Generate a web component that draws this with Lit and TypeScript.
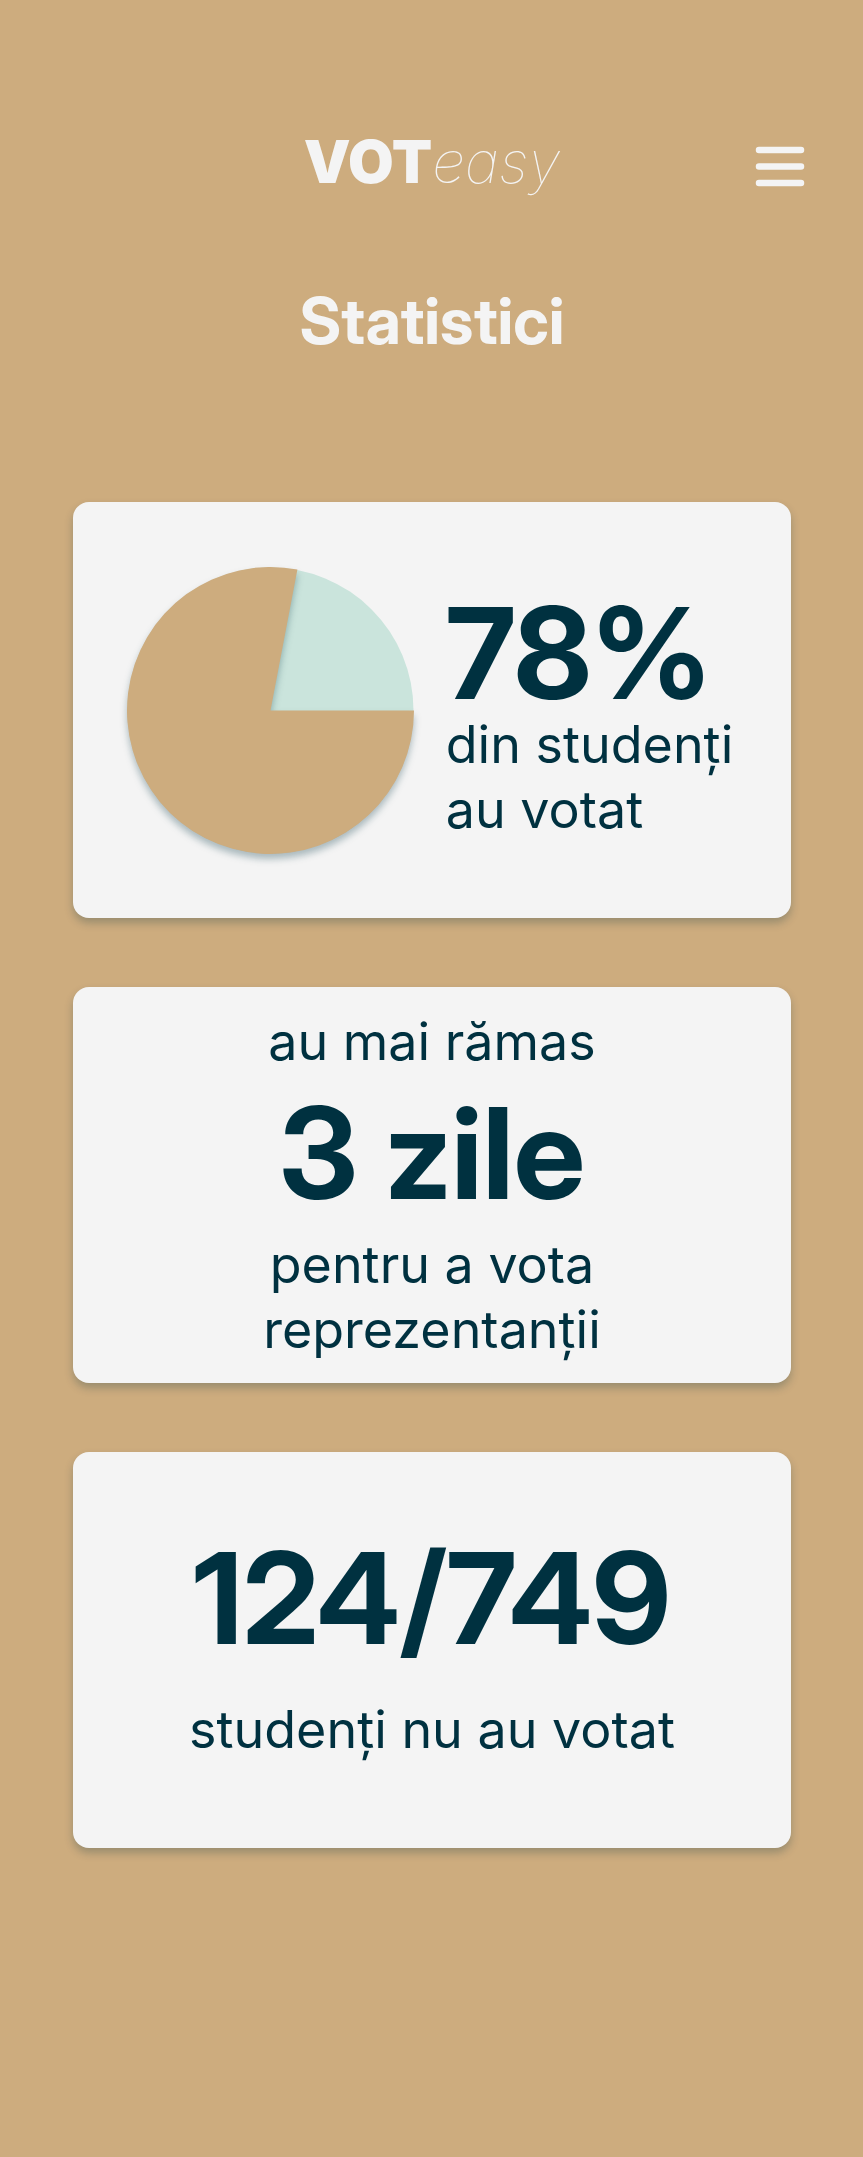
import { LitElement, html, css } from "lit";
import { customElement } from "lit/decorators.js";

@customElement("app-root")
class AppRoot extends LitElement {
  static styles = css`
    :host {
      display: block;
      box-sizing: border-box;
      min-height: 100vh;
      padding: 126px 72px 0 73px;
      background: #cdac7e;
      color: #003140;
      font-family: Inter, "Liberation Sans", sans-serif;
    }
    header {
      display: grid;
      grid-template-columns: 1fr auto 1fr;
      align-items: center;
      margin: 0 -14px;
      color: #f4f4f4;
    }
    .logo {
      grid-column: 2;
      font-size: 59px;
      line-height: 72px;
      color: inherit;
      text-decoration: none;
    }
    .logo b { font-weight: 900; }
    .logo i { font-weight: 100; }
    .menu {
      justify-self: end;
      display: block;
      padding: 8px 0 0;
      border: 0;
      background: none;
      color: inherit;
    }
    .menu svg { display: block; }
    h1 {
      margin: 85px 0 143px;
      color: #f4f4f4;
      font-family: "Inter Display", Inter, sans-serif;
      font-size: 64px;
      font-weight: 700;
      line-height: 76px;
      text-align: center;
    }
    main { display: grid; gap: 69px; }
    .card {
      box-sizing: border-box;
      display: flex;
      flex-direction: column;
      align-items: center;
      justify-content: center;
      gap: 20px;
      min-height: 396px;
      border-radius: 16px;
      background: #f4f4f4;
      box-shadow: 0 5px 8px rgb(0 49 64 / 25%);
      text-align: center;
    }
    .turnout {
      flex-direction: row;
      gap: 32px;
      min-height: 416px;
      padding-right: 4px;
      text-align: left;
    }
    .turnout p { padding-top: 16px; }
    .remaining { gap: 40px; }
    .pie { display: block; flex: none; overflow: visible; }
    .voted { filter: drop-shadow(0 5px 4px rgb(0 49 64 / 30%)); }
    p { margin: 0; font-size: 52px; line-height: 65px; }
    .figure {
      display: block;
      font-family: "Inter Display", Inter, sans-serif;
      font-size: 127px;
      font-weight: 700;
      line-height: 118px;
    }
  `;

  render() {
    return html`
      <header>
        <a class="logo" href="#"><b>VOT</b><i>easy</i></a>
        <button class="menu" aria-label="Meniu">
          <svg width="50" height="42" viewBox="0 0 50 42" stroke="currentColor" stroke-width="6.5" stroke-linecap="round">
            <path d="M4 5H46M4 21.5H46M4 38H46" />
          </svg>
        </button>
      </header>
      <h1>Statistici</h1>
      <main>
        <section class="card turnout">
          <svg class="pie" width="287" height="287" viewBox="-144 -144 288 288" role="img" aria-label="78%">
            <circle r="143.5" fill="#cae4dc" />
            <path class="voted" d="M0 0H144A144 144 0 1 1 27 -141.5Z" fill="#cdac7e" />
          </svg>
          <p><strong class="figure">78%</strong>din studenți<br />au votat</p>
        </section>
        <section class="card">
          <p>au mai rămas</p>
          <p><strong class="figure">3 zile</strong></p>
          <p>pentru a vota<br />reprezentanții</p>
        </section>
        <section class="card remaining">
          <p><strong class="figure">124/749</strong></p>
          <p>studenți nu au votat</p>
        </section>
      </main>
    `;
  }
}
